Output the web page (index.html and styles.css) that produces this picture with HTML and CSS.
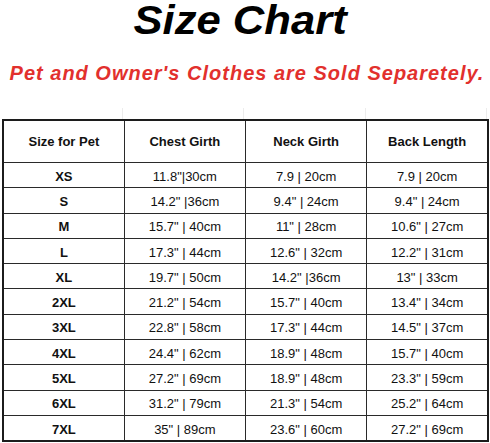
FILE: index.html
```html
<!DOCTYPE html>
<html lang="en">
<head>
<meta charset="utf-8">
<title>Size Chart</title>
<link rel="stylesheet" href="styles.css">
</head>
<body>
<h1 class="title">Size Chart</h1>
<p class="note">Pet and Owner's Clothes are Sold Separetely.</p>
<div class="ghost"><span></span><span></span><span></span><span></span></div>
<table class="chart">
  <thead>
    <tr><th>Size for Pet</th><th>Chest Girth</th><th>Neck Girth</th><th>Back Length</th></tr>
  </thead>
  <tbody>
    <tr><td class="size">XS</td><td>11.8"|30cm</td><td>7.9 | 20cm</td><td>7.9 | 20cm</td></tr>
    <tr><td class="size">S</td><td>14.2" |36cm</td><td>9.4" | 24cm</td><td>9.4" | 24cm</td></tr>
    <tr><td class="size">M</td><td>15.7" | 40cm</td><td>11" | 28cm</td><td>10.6" | 27cm</td></tr>
    <tr><td class="size">L</td><td>17.3" | 44cm</td><td>12.6" | 32cm</td><td>12.2" | 31cm</td></tr>
    <tr><td class="size">XL</td><td>19.7" | 50cm</td><td>14.2" |36cm</td><td>13" | 33cm</td></tr>
    <tr><td class="size">2XL</td><td>21.2" | 54cm</td><td>15.7" | 40cm</td><td>13.4" | 34cm</td></tr>
    <tr><td class="size">3XL</td><td>22.8" | 58cm</td><td>17.3" | 44cm</td><td>14.5" | 37cm</td></tr>
    <tr><td class="size">4XL</td><td>24.4" | 62cm</td><td>18.9" | 48cm</td><td>15.7" | 40cm</td></tr>
    <tr><td class="size">5XL</td><td>27.2" | 69cm</td><td>18.9" | 48cm</td><td>23.3" | 59cm</td></tr>
    <tr><td class="size">6XL</td><td>31.2" | 79cm</td><td>21.3" | 54cm</td><td>25.2" | 64cm</td></tr>
    <tr><td class="size">7XL</td><td>35" | 89cm</td><td>23.6" | 60cm</td><td>27.2" | 69cm</td></tr>
  </tbody>
</table>
</body>
</html>
```
FILE: styles.css
```css
html, body {
  margin: 0;
  padding: 0;
  background: #ffffff;
}
body {
  width: 490px;
  font-family: "Liberation Sans", Arial, sans-serif;
  color: #111111;
}
.title {
  margin: 0;
  padding-right: 9px;
  font-size: 40px;
  line-height: 40px;
  font-weight: bold;
  font-style: italic;
  text-align: center;
  color: #000000;
  transform: scaleX(1.09);
}
.note {
  margin: 23px 0 0 0;
  padding-left: 4px;
  font-size: 20px;
  line-height: 20px;
  font-weight: bold;
  font-style: italic;
  text-align: center;
  color: #e2302d;
  letter-spacing: 1px;
}
.ghost {
  display: grid;
  grid-template-columns: 122px 121px 122px 121px;
  height: 11px;
  margin: 25px 0 0 1px;
}
.ghost span {
  border-right: 1px solid #ececec;
}
.chart {
  border-collapse: collapse;
  width: 487px;
  margin: 0 0 0 2px;
  table-layout: fixed;
  border: 2px solid #1c1c1c;
}
.chart th,
.chart td {
  border: 1px solid #2a2a2a;
  text-align: center;
  vertical-align: middle;
  padding: 0;
  font-size: 13px;
  line-height: 15px;
}
.chart th {
  height: 41px;
  font-weight: bold;
}
.chart td {
  height: 22.3px;
  padding-top: 2px;
}
.chart td.size {
  font-weight: bold;
}
```
